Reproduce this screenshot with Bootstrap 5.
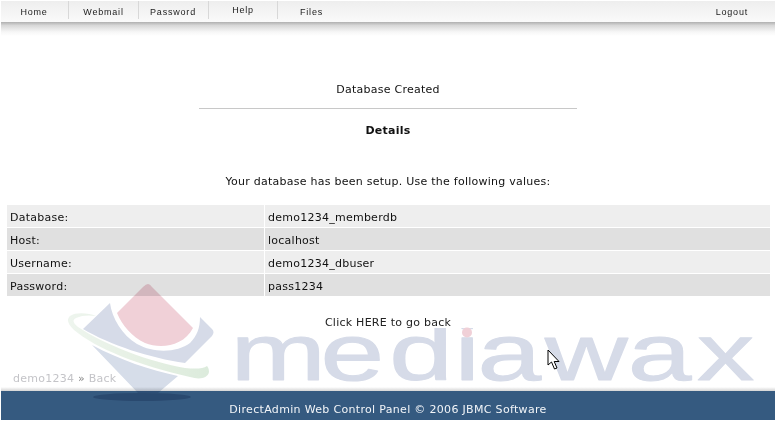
<!DOCTYPE html>
<html lang="en">
<head>
<meta charset="utf-8">
<title>Database Created</title>
<link href="https://cdn.jsdelivr.net/npm/bootstrap@5.3.0/dist/css/bootstrap.min.css" rel="stylesheet">
<style>
html,body{height:422px;overflow:hidden}
body{font:11px/14px "DejaVu Sans",Verdana,sans-serif;letter-spacing:.25px;color:#111;background:#fff;position:relative}
a{color:inherit;text-decoration:none}
.shell{height:421px;margin:0 1px 0 1px}
.topbar{height:21px;margin-top:1px;background:linear-gradient(#eeeeee,#fafafa);font:9px/14px "Liberation Sans",Arial,sans-serif;letter-spacing:.8px;color:#222}
.topgap{height:14px;background:linear-gradient(#b0b0b0,#d8d8d8 25%,#f6f6f6 70%,#fff)}
.tab{height:14px;text-align:center;border-right:1px solid #d8d8d8;padding-top:4px;line-height:14px;box-sizing:content-box}
.tab1{width:66px;padding-right:1px}.tab2{width:69px}.tab3{width:68px;padding-right:1px}.tab4{width:68px;padding-top:2px;height:16px}
.tab5{width:67px;border:0}
.out{margin-right:27px;padding-top:4px}
.heading{margin-top:47px;height:14px}
.rule{width:378px;margin:11px auto 0;border-top:1px solid #c8c8c8;height:1px}
.detail{margin-top:15px;height:14px}
.intro{margin-top:37px;height:14px}
.datagrid{margin:16px 5px 0 6px;display:grid;grid-template-columns:257px 1fr;gap:1px 1px}
.datagrid>div{height:22px;line-height:25px;padding-left:3px}
.rowa{background:rgba(0,0,0,.067)}
.rowb{background:rgba(0,0,0,.122)}
.backlink{margin-top:20px;height:14px;color:#222}
.crumbs{margin:42px 0 0 12px;height:14px;color:#c4c4c8}
.crumbs b{color:#888;font-weight:400}
.footfade{height:4px;margin-top:1px;background:linear-gradient(#fff,#d4d4d4)}
.footer-bar{height:29px;background:#355a80;color:#f2f5f8;line-height:37px;letter-spacing:.32px}
.mark-art{position:absolute;left:0;top:0;width:776px;height:422px;mix-blend-mode:multiply;pointer-events:none}
.word{font-family:"Liberation Sans",sans-serif;font-size:79px;letter-spacing:0;fill:#d6dbe8;stroke:#d6dbe8;stroke-width:1;stroke-linejoin:round}
.cursor{position:absolute;left:547px;top:349px;width:14px;height:22px}
</style>
</head>
<body>
<div class="shell d-flex flex-column">
  <div class="topbar d-flex">
    <a class="tab tab1" href="#">Home</a>
    <a class="tab tab2" href="#">Webmail</a>
    <a class="tab tab3" href="#">Password</a>
    <a class="tab tab4" href="#">Help</a>
    <a class="tab tab5" href="#">Files</a>
    <a class="out ms-auto" href="#">Logout</a>
  </div>
  <div class="topgap"></div>
  <div class="heading text-center">Database Created</div>
  <div class="rule"></div>
  <div class="detail text-center fw-bold">Details</div>
  <div class="intro text-center">Your database has been setup. Use the following values:</div>
  <div class="datagrid">
    <div class="rowa">Database:</div><div class="rowa">demo1234_memberdb</div>
    <div class="rowb">Host:</div><div class="rowb">localhost</div>
    <div class="rowa">Username:</div><div class="rowa">demo1234_dbuser</div>
    <div class="rowb">Password:</div><div class="rowb">pass1234</div>
  </div>
  <div class="backlink text-center"><a href="#">Click HERE to go back</a></div>
  <div class="crumbs">demo1234 <b>»</b> Back</div>
  <div class="footfade"></div>
  <div class="footer-bar text-center">DirectAdmin Web Control Panel © 2006 JBMC Software</div>
</div>
<svg class="mark-art" viewBox="0 0 776 422" aria-hidden="true">
  <defs>
    <clipPath id="wordclip"><rect x="0" y="328" width="776" height="60"/></clipPath>
    <linearGradient id="swoosh" x1="0" x2="1" y1="0" y2="0"><stop offset="0" stop-color="#eef5ee"/><stop offset=".5" stop-color="#e6f0e4"/><stop offset="1" stop-color="#dcebdc"/></linearGradient>
  </defs>
  <path d="M148 284 Q146 284 143 287 L117 313 C122 325 132 337 145 343 C160 349 183 347 193 328 L152 287 Q150 284 148 284Z" fill="#f0d0d7"/>
  <path d="M110 303 C112 318 122 335 137 344 C155 354 178 352 190 343 C197 336 200 328 200 317 L212 329 Q215 332 212 336 L185 363 C150 358 110 345 83 329Z" fill="#d6dbe8"/>
  <path d="M92 345 C120 360 150 370 178 376 L158 393 L138 393Z" fill="#d6dde9"/>
  <path d="M96 316 C88 313 76 312 70 316 C66 320 68 324 74 330 C95 348 140 366 190 377 C200 380 208 378 209 372 C209 369 208 367 207 366 C203 369 195 369 185 368 C150 362 105 345 78 327 C73 323 72 320 76 318 C82 315 90 315 96 316Z" fill="url(#swoosh)"/>
  <ellipse cx="142" cy="397" rx="49" ry="4" fill="#c4cddd"/>
  <g clip-path="url(#wordclip)"><text class="word" transform="translate(0,380) scale(1.45,1)" x="158.9 221 268.4 313.4 329.4 375.9 432.9 480.7" y="0">mediawax</text></g>
  <circle cx="467" cy="332.5" r="5" fill="#f0d0d7"/>
</svg>
<svg class="cursor" viewBox="0 0 14 22" aria-hidden="true"><path d="M1 1V16L4.5 13L7.5 20L10 19L7.2 12.5H12Z" fill="#fff" stroke="#000" stroke-width="1"/></svg>
<script src="https://cdn.jsdelivr.net/npm/bootstrap@5.3.0/dist/js/bootstrap.bundle.min.js"></script>
</body>
</html>
